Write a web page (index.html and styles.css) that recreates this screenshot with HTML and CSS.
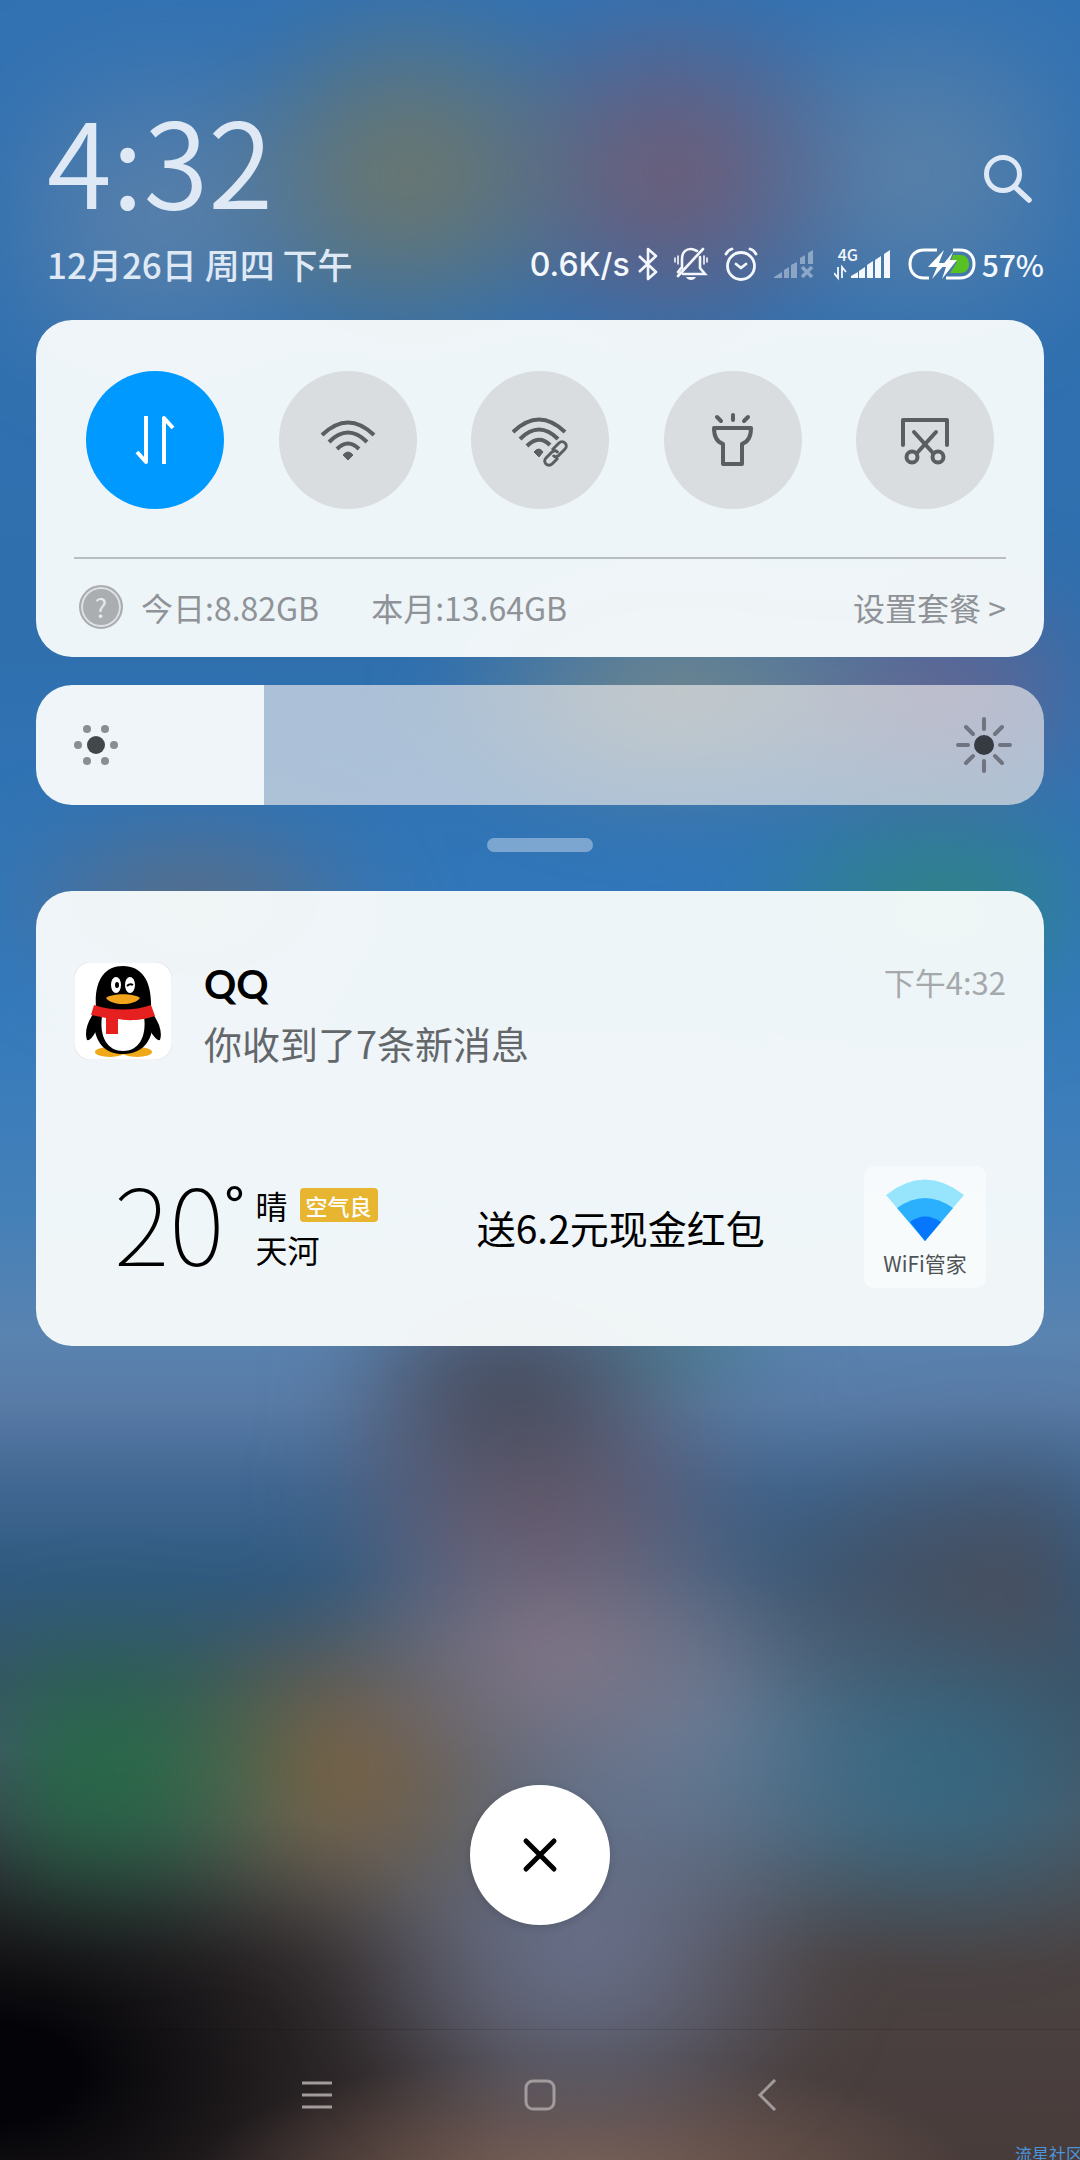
FILE: index.html
```html
<!DOCTYPE html>
<html lang="zh-CN">

<head>
  <meta charset="UTF-8">
  <meta name="viewport" content="width=device-width, initial-scale=1.0">
  <title>通知栏</title>
  <link rel="stylesheet" href="styles.css">
</head>

<body>
  <div class="shade">
    <header class="header">
      <div class="header-top">
        <div class="clock">4:32</div>
        <button class="search" aria-label="搜索">
          <svg width="48" height="50" viewBox="0 0 48 50" fill="none" stroke="currentColor">
            <circle cx="19" cy="20" r="16.500" stroke-width="5" />
            <path d="M31 33L45 46" stroke-width="5.500" stroke-linecap="round" />
          </svg>
        </button>
      </div>
      <div class="header-bottom">
        <div class="date">12月26日 周四 下午</div>
        <div class="status">
          <span class="speed">0.6K/s</span>
          <!-- bluetooth -->
          <svg class="bluetooth" width="20" height="34" viewBox="0 0 20 34" fill="none" stroke="currentColor" stroke-width="2.600" stroke-linejoin="round">
            <path d="M1 9L18 25L10 32V2L18 9L1 25" />
          </svg>
          <!-- silent -->
          <svg class="silent" width="34" height="34" viewBox="0 0 34 34" fill="none" stroke="currentColor" stroke-width="2.600" stroke-linecap="round">
            <path d="M8 21V12C8 5 12 2 17 2C19 2 21 3 23 4M26 10V21L31 27H9M4 29L29 2M8 20L4 25" />
            <path d="M4 9V17M1 11V15M30 9V17M33 11V15" stroke-width="1.600" />
            <path d="M12 30H22C20 34 14 34 12 30Z" fill="currentColor" stroke="none" />
          </svg>
          <!-- alarm -->
          <svg class="alarm" width="34" height="34" viewBox="0 0 34 34" fill="none" stroke="currentColor" stroke-width="2.800" stroke-linecap="round" stroke-linejoin="round">
            <circle cx="17" cy="19" r="13.500" />
            <path d="M2 7Q4 3 8 2M26 2Q30 3 32 7M12 17L17 21L22 17" />
          </svg>
          <!-- sim 1, no service -->
          <svg class="sim-off" width="40" height="30" viewBox="0 0 40 30" fill="currentColor">
            <path d="M0 29V28L8 23V29ZM10 21L15 18V29H10ZM17 16L23 13V29H17ZM26 9L31 6V15H26ZM34 4L39 1V15H34Z" />
            <path d="M28 18L38 28M38 18L28 28" stroke="currentColor" stroke-width="3.500" />
          </svg>
          <!-- sim 2 -->
          <span class="sim">
            <span class="network">4G</span>
            <svg width="58" height="34" viewBox="0 0 58 34" fill="currentColor">
              <path d="M4 20V31L0 26M8 31V20L12 25" fill="none" stroke="currentColor" stroke-width="1.800" />
              <path d="M17 31V29L24 25V31ZM25 24L31 20V31H25ZM33 18L39 14V31H33ZM41 13L47 9V31H41ZM50 7L56 3V31H50Z" />
            </svg>
          </span>
          <!-- battery -->
          <svg class="battery" width="68" height="32" viewBox="0 0 68 32">
            <path d="M45 7H53C58 7 61 11 61 16C61 21 58 25 53 25H42L49 14H43Z" fill="#57c022" />
            <path d="M29 2H16C7 2 2 8 2 16C2 24 7 30 16 30H21M45 2H52C61 2 66 8 66 16C66 24 61 30 52 30H38" fill="none" stroke="#fff" stroke-width="3" />
            <path d="M36 2L20 19H29L24 31L38 15H31Z" fill="#fff" />
            <path d="M45 4L33 19H38L34 31L49 12H42Z" fill="#fff" />
          </svg>
          <span class="percent">57%</span>
        </div>
      </div>
    </header>

    <section class="card quick">
      <div class="toggles">
        <button class="toggle active" aria-label="移动数据">
          <svg width="56" height="56" viewBox="0 0 56 56" fill="none" stroke="currentColor" stroke-width="4" stroke-linejoin="round">
            <path d="M19 4V50L10 40M37 52V6L46 16" />
          </svg>
        </button>
        <button class="toggle" aria-label="WLAN">
          <svg width="56" height="56" viewBox="0 0 56 56" fill="none" stroke="currentColor" stroke-width="4">
            <path d="M2 23Q28 -2 54 23M9 30Q28 11 47 30M17 37Q28 26 39 37" />
            <path d="M23 43Q28 37 33 43L28 48Z" fill="currentColor" stroke-width="1" />
          </svg>
        </button>
        <button class="toggle" aria-label="WLAN 共享">
          <svg width="56" height="56" viewBox="0 0 56 56" fill="none" stroke="currentColor" stroke-width="4">
            <path d="M1 20Q27 -5 53 20M8 27Q27 8 46 27M15 34Q27 22 38 33" />
            <path d="M22 40Q27 34 31 40L27 45Z" fill="currentColor" stroke-width="1" />
            <path d="M40 38L47 31A4 4 0 0 1 53 37L46 44Q43 46 41 43M46 41Q44 37 40 40L34 46A4 4 0 0 0 40 52L46 46" stroke-width="3" />
          </svg>
        </button>
        <button class="toggle" aria-label="手电筒">
          <svg width="56" height="56" viewBox="0 0 56 56" fill="none" stroke="currentColor" stroke-width="4" stroke-linecap="round" stroke-linejoin="round">
            <path d="M9 16H46C46 25 43 30 37 32V52H18V32C12 30 9 25 9 16ZM28 3V8M12 5L16 9M43 5L39 9" />
          </svg>
        </button>
        <button class="toggle" aria-label="截屏">
          <svg width="56" height="56" viewBox="0 0 56 56" fill="none" stroke="currentColor" stroke-width="4" stroke-linecap="round" stroke-linejoin="round">
            <path d="M6 33V8H50V33M17 20L36 41M39 20L20 41" />
            <circle cx="15" cy="45" r="5.500" />
            <circle cx="41" cy="45" r="5.500" />
          </svg>
        </button>
      </div>
      <div class="traffic">
        <span class="help">?</span>
        <span class="today">今日:8.82GB</span>
        <span class="month">本月:13.64GB</span>
        <a class="plan" href="#">设置套餐 &gt;</a>
      </div>
    </section>

    <div class="brightness">
      <input type="range" min="0" max="1000" value="226" aria-label="亮度">
      <svg class="low" width="44" height="44" viewBox="0 0 44 44">
        <circle cx="22" cy="22" r="9" fill="#43474a" />
        <g fill="#8a8e91">
          <circle cx="4" cy="22" r="4" />
          <circle cx="40" cy="22" r="4" />
          <circle cx="13" cy="6" r="4" />
          <circle cx="31" cy="6" r="4" />
          <circle cx="13" cy="38" r="4" />
          <circle cx="31" cy="38" r="4" />
        </g>
      </svg>
      <svg class="high" width="56" height="56" viewBox="0 0 56 56">
        <circle cx="28" cy="28" r="10" fill="#363b42" />
        <path d="M28 2V12M28 44V54M2 28H12M44 28H54M10 10L17 17M39 39L46 46M46 10L39 17M17 39L10 46" stroke="#6f7480" stroke-width="4" stroke-linecap="round" />
      </svg>
    </div>

    <div class="handle"></div>

    <section class="card notices">
      <article class="notice">
        <svg class="app-icon" width="98" height="98" viewBox="0 0 98 98">
          <rect x="0" y="0" width="98" height="98" rx="17" fill="#fff" stroke="#e6e7e9" />
          <ellipse cx="36" cy="90" rx="15" ry="5" fill="#f0a818" />
          <ellipse cx="63" cy="90" rx="15" ry="5" fill="#f0a818" />
          <path d="M22 48C14 58 10 69 13 78C16 79 20 74 22 68ZM76 48C84 58 89 69 86 78C83 79 79 74 76 68Z" />
          <path d="M22 46C20 19 30 4 49 4C68 4 78 19 77 46C82 62 79 92 49 92C20 92 17 62 22 46Z" />
          <path d="M28 54C25 76 34 89 49 89C64 89 73 76 70 54Z" fill="#fff" />
          <path d="M20 43C38 49 60 49 77 43L81 54C64 60 49 58 44 57V72H32V56L17 53Z" fill="#e5201f" />
          <ellipse cx="42" cy="23" rx="5" ry="8" fill="#fff" />
          <ellipse cx="56" cy="23" rx="5" ry="8" fill="#fff" />
          <ellipse cx="43" cy="23" rx="2" ry="3" />
          <path d="M53 24Q56 21 59 23" fill="none" stroke="#000" stroke-width="2" />
          <path d="M32 36C38 31 60 31 66 36C60 44 38 44 32 36Z" fill="#f2a51a" />
        </svg>
        <div class="notice-body">
          <div class="notice-head">
            <h2>QQ</h2>
            <time>下午4:32</time>
          </div>
          <p>你收到了7条新消息</p>
        </div>
      </article>

      <article class="weather">
        <div class="temp">20<span>°</span></div>
        <div class="place">
          <div class="sky">晴 <span class="air">空气良</span></div>
          <div>天河</div>
        </div>
        <div class="promo">送6.2元现金红包</div>
        <a class="wifi" href="#">
          <svg width="78" height="62" viewBox="0 0 78 62">
            <path d="M0 16Q39 -15 78 16L39 62Z" fill="#97e5fd" />
            <path d="M11 29Q39 9 67 29L39 62Z" fill="#2bb0fd" />
            <path d="M24 43Q39 32 55 43L39 62Z" fill="#0676fc" />
          </svg>
          <span>WiFi管家</span>
        </a>
      </article>
    </section>

    <button class="close" aria-label="清除全部">
      <svg width="36" height="36" viewBox="0 0 36 36" fill="none" stroke="currentColor" stroke-width="5" stroke-linecap="round">
        <path d="M4 4L32 32M32 4L4 32" />
      </svg>
    </button>

    <nav class="navbar">
      <button aria-label="菜单">
        <svg width="32" height="32" viewBox="0 0 32 32" fill="none" stroke="currentColor" stroke-width="3">
          <path d="M2 4H32M2 16H32M2 28H32" />
        </svg>
      </button>
      <button aria-label="主页">
        <svg width="32" height="32" viewBox="0 0 32 32" fill="none" stroke="currentColor" stroke-width="3">
          <rect x="2" y="2" width="28" height="28" rx="7" />
        </svg>
      </button>
      <button aria-label="返回">
        <svg width="32" height="32" viewBox="0 0 32 32" fill="none" stroke="currentColor" stroke-width="3">
          <path d="M27 1L12 16L27 31" />
        </svg>
      </button>
    </nav>
    <span class="watermark">流星社区</span>
  </div>
</body>

</html>
```

FILE: styles.css
```css
* {
  box-sizing: border-box;
}

body {
  margin: 0;
  font-family: "Noto Sans CJK SC", sans-serif;
}

button {
  padding: 0;
  border: none;
  background: none;
  color: inherit;
  cursor: pointer;
}

a {
  color: inherit;
  text-decoration: none;
}

svg {
  display: block;
  flex: none;
}

h2,
p {
  margin: 0;
}

.shade {
  position: relative;
  z-index: 0;
  display: flex;
  flex-direction: column;
  min-height: 100vh;
  padding: 106px 36px 0;
  overflow: hidden;
  background:
    radial-gradient(ellipse 36% 6% at 54% 101%, rgba(132, 102, 90, 0.9), rgba(132, 102, 90, 0)),
    radial-gradient(ellipse 48% 15% at 0 96%, rgb(4, 4, 8) 15%, rgba(4, 4, 8, 0)),
    linear-gradient(#3272b3 0, #2f6fae 30%, #3279bd 45%, #4480b8 56%, #5a83b0 62%, #587ba6 65%, #3f6690 69%, #305a80 73%, #385468 78%, #4a5a68 84%, #4a4242 91%, #483c3a);
}

/* blurred wallpaper */
.shade::before {
  content: "";
  position: absolute;
  inset: 0;
  z-index: -1;
  filter: blur(40px);
  background:
    radial-gradient(ellipse 19% 9% at 38% 8%, rgba(112, 119, 104, 0.9) 20%, rgba(112, 119, 104, 0)),
    radial-gradient(ellipse 19% 9% at 62% 8%, rgba(114, 92, 116, 0.9) 20%, rgba(114, 92, 116, 0)),
    radial-gradient(ellipse 20% 9% at 15% 10%, rgba(100, 132, 168, 0.9), rgba(100, 132, 168, 0)),
    radial-gradient(ellipse 20% 9% at 85% 8%, rgba(98, 132, 166, 0.95), rgba(98, 132, 166, 0)),
    radial-gradient(ellipse 24% 6% at 63% 32%, rgba(132, 140, 130, 0.9), rgba(132, 140, 130, 0)),
    radial-gradient(ellipse 20% 6% at 87% 32%, rgba(124, 96, 130, 0.8), rgba(124, 96, 130, 0)),
    radial-gradient(ellipse 20% 5% at 18% 42%, rgba(100, 106, 120, 0.95), rgba(100, 106, 120, 0)),
    radial-gradient(ellipse 20% 6% at 87% 42%, rgba(46, 134, 116, 0.9), rgba(46, 134, 116, 0)),
    radial-gradient(ellipse 17% 6% at 47% 64%, rgba(70, 74, 90, 0.95) 20%, rgba(70, 74, 90, 0)),
    radial-gradient(ellipse 12% 3% at 62% 62%, rgba(64, 116, 122, 0.95), rgba(64, 116, 122, 0)),
    radial-gradient(ellipse 22% 7% at 50% 69%, rgba(106, 88, 104, 0.95) 10%, rgba(106, 88, 104, 0)),
    radial-gradient(ellipse 22% 8% at 51% 76%, rgba(136, 120, 136, 0.95) 10%, rgba(136, 120, 136, 0)),
    radial-gradient(ellipse 20% 8% at 10% 82%, rgba(34, 108, 66, 0.9) 10%, rgba(34, 108, 66, 0)),
    radial-gradient(ellipse 20% 8% at 31% 82%, rgba(124, 98, 66, 0.95) 15%, rgba(124, 98, 66, 0)),
    radial-gradient(ellipse 22% 8% at 87% 82%, rgba(50, 106, 134, 0.95), rgba(50, 106, 134, 0)),
    radial-gradient(ellipse 32% 8% at 95% 74%, rgba(74, 78, 92, 0.95) 20%, rgba(74, 78, 92, 0)),
    radial-gradient(ellipse 28% 9% at 66% 80%, rgba(108, 130, 160, 0.95), rgba(108, 130, 160, 0)),
    radial-gradient(ellipse 24% 10% at 54% 90%, rgba(104, 112, 138, 0.95) 20%, rgba(104, 112, 138, 0));
}

.header {
  padding-left: 11px;
  color: #dfe9f5;
}

.header-top {
  display: flex;
  justify-content: space-between;
  height: 132px;
}

.clock {
  font-size: 118px;
  font-weight: 350;
  line-height: 104px;
}

.search {
  align-self: flex-end;
  margin: 0 12px 34px 0;
}

.header-bottom {
  display: flex;
  justify-content: space-between;
  align-items: center;
  height: 52px;
  margin-bottom: 30px;
}

.date {
  font-size: 35px;
  font-weight: 500;
  line-height: 52px;
}

.status {
  display: flex;
  align-items: center;
  color: #f4f8fd;
  font-size: 30px;
  font-weight: 500;
}

.speed {
  font-family: Inter, sans-serif;
  font-size: 32px;
}

.bluetooth {
  margin-left: 8px;
}

.silent,
.alarm,
.sim-off,
.battery {
  margin-left: 16px;
}

.sim-off {
  opacity: 0.4;
}

.sim {
  position: relative;
  margin-left: 20px;
}

.network {
  position: absolute;
  top: -2px;
  left: 4px;
  font-size: 16px;
  line-height: 18px;
}

.percent {
  margin-left: 6px;
}

.card {
  border-radius: 36px;
  background-color: rgba(249, 252, 252, 0.95);
}

.quick {
  padding: 51px 38px 0;
}

.toggles {
  display: flex;
  justify-content: space-between;
  padding: 0 12px 48px;
  border-bottom: 2px solid #b9bdc2;
}

.toggle {
  display: flex;
  justify-content: center;
  align-items: center;
  width: 138px;
  height: 138px;
  border-radius: 50%;
  background-color: #d9dddf;
  color: #5a5e61;
}

.toggle.active {
  background-color: #0099ff;
  color: #fff;
}

.traffic {
  display: flex;
  align-items: center;
  height: 96px;
  margin-bottom: 2px;
  color: #8f9397;
  font-size: 32px;
  line-height: 44px;
}

.help {
  width: 44px;
  height: 44px;
  margin: 0 18px 0 5px;
  border: 2px solid #abaeb1;
  border-radius: 50%;
  background-color: #abaeb1;
  box-shadow: inset 0 0 0 2px #dfe2e5;
  color: #e6e9ec;
  font-size: 26px;
  line-height: 40px;
  text-align: center;
}

.month {
  margin-left: 52px;
}

.plan {
  margin-left: auto;
}

.brightness {
  position: relative;
  height: 120px;
  margin-top: 28px;
}

.brightness input {
  display: block;
  width: 100%;
  height: 100%;
  margin: 0;
  border-radius: 36px;
  background: linear-gradient(to right, rgba(249, 252, 252, 0.95) 22.6%, rgba(242, 238, 236, 0.64) 22.6%);
  appearance: none;
}

.brightness input::-webkit-slider-thumb {
  width: 4px;
  height: 120px;
  appearance: none;
}

.brightness svg {
  position: absolute;
  top: 0;
  bottom: 0;
  margin: auto 0;
  pointer-events: none;
}

.brightness .low {
  left: 38px;
}

.brightness .high {
  right: 32px;
}

.handle {
  align-self: center;
  width: 106px;
  height: 14px;
  margin: 33px 0 39px;
  border-radius: 7px;
  background-color: rgba(255, 255, 255, 0.36);
}

.notices {
  padding: 71px 38px 58px;
}

.notice {
  display: flex;
  gap: 32px;
}

.notice-body {
  flex: 1;
}

.notice-head {
  display: flex;
  justify-content: space-between;
  height: 44px;
}

.notice h2 {
  font-family: Lato, sans-serif;
  font-size: 40px;
  font-weight: 700;
  line-height: 44px;
}

.notice time {
  color: #a5a9ac;
  font-size: 31px;
  line-height: 40px;
}

.notice p {
  margin-top: 9px;
  color: #63676a;
  font-size: 38px;
  line-height: 56px;
}

.weather {
  display: flex;
  align-items: center;
  margin-top: 95px;
  padding: 0 20px 0 40px;
}

.temp {
  display: flex;
  margin-top: -14px;
  font-size: 106px;
  font-weight: 100;
  line-height: 122px;
}

.temp span {
  font-weight: 500;
  font-size: 52px;
  line-height: 90px;
}

.place {
  margin-left: 11px;
  font-size: 32px;
  line-height: 44px;
}

.sky {
  display: flex;
  align-items: center;
  gap: 12px;
}

.air {
  padding: 0 6px;
  border-radius: 4px;
  background-color: #e7b52f;
  color: #fff;
  font-size: 22px;
  font-weight: 500;
  line-height: 34px;
}

.promo {
  margin: 0 auto;
  font-size: 39px;
}

.wifi {
  display: flex;
  flex-direction: column;
  align-items: center;
  width: 122px;
  height: 122px;
  padding-top: 13px;
  border-radius: 10px;
  background-color: rgba(255, 255, 255, 0.5);
  color: #4f5356;
  font-size: 21px;
  line-height: 44px;
}

.close {
  display: flex;
  justify-content: center;
  align-items: center;
  align-self: center;
  width: 140px;
  height: 140px;
  margin: auto 0 104px;
  border-radius: 50%;
  background-color: #fff;
  box-shadow: 0 2px 8px rgba(0, 0, 0, 0.15);
  color: #000;
}

.navbar {
  display: flex;
  justify-content: center;
  align-items: center;
  gap: 192px;
  height: 131px;
  margin: 0 -36px;
  border-top: 1px solid rgba(0, 0, 0, 0.12);
  color: #a19b9c;
}

.watermark {
  position: absolute;
  right: -3px;
  bottom: -6px;
  color: #4a94dd;
  font-size: 17px;
  line-height: 24px;
}
```
